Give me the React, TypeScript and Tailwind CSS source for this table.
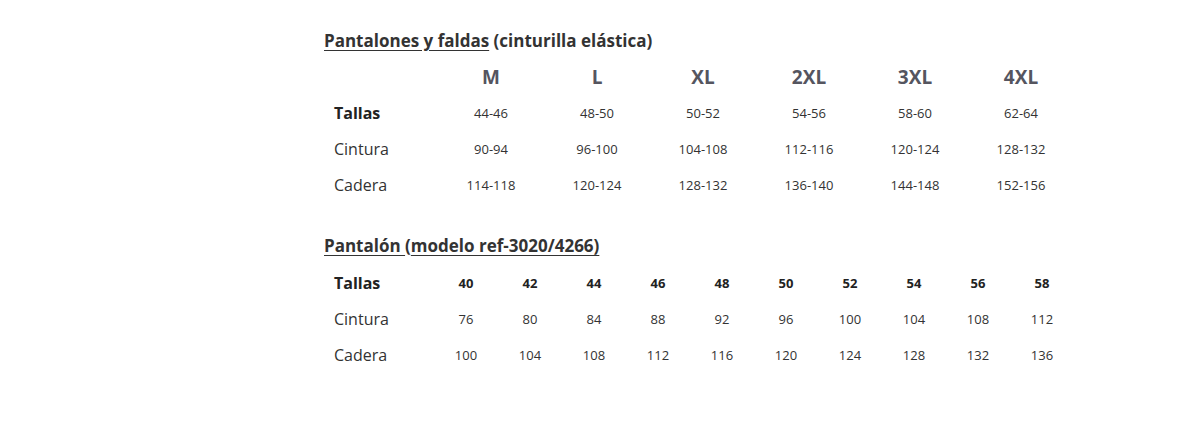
import React from 'react';

const sizes = ['M', 'L', 'XL', '2XL', '3XL', '4XL'];
const elastic = [
    { label: 'Tallas', bold: true, values: ['44-46', '48-50', '50-52', '54-56', '58-60', '62-64'] },
    { label: 'Cintura', bold: false, values: ['90-94', '96-100', '104-108', '112-116', '120-124', '128-132'] },
    { label: 'Cadera', bold: false, values: ['114-118', '120-124', '128-132', '136-140', '144-148', '152-156'] },
];

const model = [
    { label: 'Tallas', bold: true, values: ['40', '42', '44', '46', '48', '50', '52', '54', '56', '58'] },
    { label: 'Cintura', bold: false, values: ['76', '80', '84', '88', '92', '96', '100', '104', '108', '112'] },
    { label: 'Cadera', bold: false, values: ['100', '104', '108', '112', '116', '120', '124', '128', '132', '136'] },
];

const App: React.FC = () => {
    return (
        <div className="w-[1196px] h-[430px] bg-white font-['Open_Sans',sans-serif] text-[#333]">
            <div className="ml-[324px] w-[750px] pt-[29px]">
                <h2 className="text-[17px] leading-6 font-bold text-[#333]">
                    <span className="underline underline-offset-[3px]">Pantalones y faldas</span> (cinturilla elástica)
                </h2>

                <div className="mt-[6px]">
                    <div className="flex h-9 items-center">
                        <div className="w-[114px]" />
                        {sizes.map((s) => (
                            <div key={s} className="w-[106px] text-center text-[19px] font-bold text-[#55555f]">
                                {s}
                            </div>
                        ))}
                    </div>
                    {elastic.map((row) => (
                        <div key={row.label} className="flex h-9 items-center">
                            <div className={`w-[114px] pl-[10px] text-[16px] ${row.bold ? 'font-bold text-[#222]' : 'text-[#333]'}`}>
                                {row.label}
                            </div>
                            {row.values.map((v, i) => (
                                <div key={i} className="w-[106px] pt-[2px] text-center text-[13px] text-[#333]">
                                    {v}
                                </div>
                            ))}
                        </div>
                    ))}
                </div>

                <h2 className="mt-[31px] text-[17px] leading-6 font-bold text-[#333]">
                    <span className="underline underline-offset-[3px]">Pantalón </span>(<span className="underline underline-offset-[3px]">modelo ref-3020/4266)</span>
                </h2>

                <div className="mt-[7px]">
                    {model.map((row) => (
                        <div key={row.label} className="flex h-9 items-center">
                            <div className={`w-[110px] pl-[10px] text-[16px] ${row.bold ? 'font-bold text-[#222]' : 'text-[#333]'}`}>
                                {row.label}
                            </div>
                            {row.values.map((v, i) => (
                                <div key={i} className={`w-[64px] pt-[2px] text-center text-[13px] ${row.bold ? 'font-bold text-[#222]' : 'text-[#333]'}`}>
                                    {v}
                                </div>
                            ))}
                        </div>
                    ))}
                </div>
            </div>
        </div>
    );
};

export default App;
